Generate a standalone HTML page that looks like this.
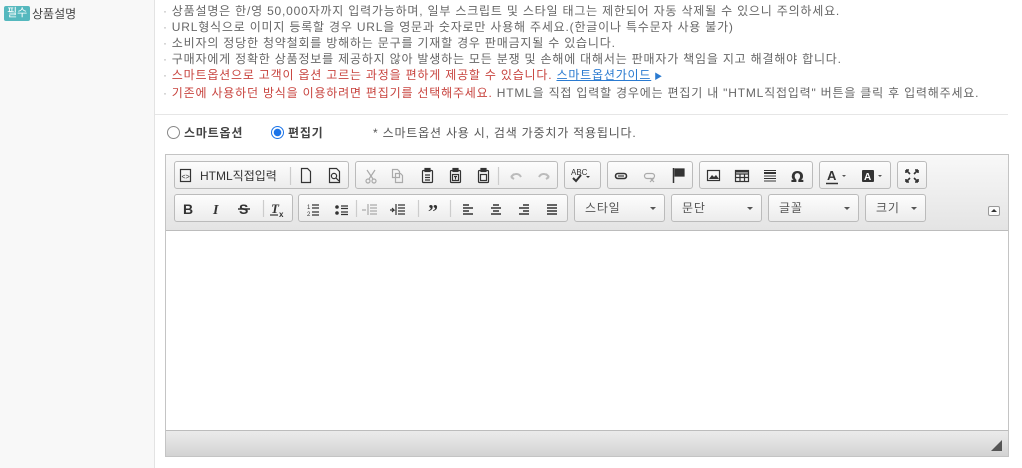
<!DOCTYPE html>
<html><head><meta charset="utf-8">
<style>
*{margin:0;padding:0;box-sizing:border-box}
body{width:1022px;height:468px;background:#fff;font-family:"Liberation Sans","Noto Sans CJK KR","NanumGothic",sans-serif;font-size:12px;color:#555;position:relative;overflow:hidden}
.left{position:absolute;left:0;top:0;width:155px;height:468px;background:#f8f8f8;border-right:1px solid #e3e3e3}
.badge{position:absolute;left:4px;top:6px;background:#55b8be;color:#fff;font-size:11px;padding:1px 3px;border-radius:2px;line-height:13px}
.lbl{position:absolute;left:32px;top:5px;color:#444;font-size:12px}
.notes{position:absolute;left:163px;top:3px;line-height:16px;font-size:12px;color:#666;letter-spacing:0.8px}
.notes div{white-space:nowrap}
.notes .r{color:#c8443f}
.notes a{color:#2a7ad0;text-decoration:underline}
.dot{color:#aaa;margin-right:4px}
.hr{position:absolute;left:155px;top:114px;width:853px;height:1px;background:#e6e6e6}
.radio{position:absolute;top:124px;font-size:12px;color:#444;font-weight:bold;letter-spacing:0.8px}
.rc{display:inline-block;width:13px;height:13px;border:1px solid #888;border-radius:50%;vertical-align:-2px;margin-right:4px;background:#fff}
.rc.on{border-color:#1a73e8;background:radial-gradient(circle,#1a73e8 3.5px,#fff 4px)}
.editor{position:absolute;left:165px;top:154px;width:844px;height:303px;border:1px solid #c4c4c4;background:#fff}
.tb{position:absolute;left:0;top:0;width:842px;height:76px;background:linear-gradient(#f8f8f8,#e4e4e4);border-bottom:1px solid #bcbcbc}
.g{position:absolute;height:28px;border:1px solid #bbb;border-radius:3px;background:linear-gradient(#fdfdfd,#ececec)}
.combo{position:absolute;height:28px;border:1px solid #bbb;border-radius:3px;background:linear-gradient(#fdfdfd,#ececec);font-size:12px;color:#555;line-height:26px;padding-left:10px;letter-spacing:0.8px}
.combo:after{content:"";position:absolute;right:8px;top:12px;border:3px solid transparent;border-top:3px solid #555}
.content{position:absolute;left:0;top:76px;width:842px;height:200px;background:#fff}
.foot{position:absolute;left:0;bottom:0;width:842px;height:26px;background:linear-gradient(#ebebeb,#d3d3d3);border-top:1px solid #bcbcbc}
</style></head><body>
<div class="left"><span class="badge">필수</span><span class="lbl">상품설명</span></div>
<div class="notes">
<div><span class="dot">·</span>상품설명은 한/영 50,000자까지 입력가능하며, 일부 스크립트 및 스타일 태그는 제한되어 자동 삭제될 수 있으니 주의하세요.</div>
<div><span class="dot">·</span>URL형식으로 이미지 등록할 경우 URL을 영문과 숫자로만 사용해 주세요.(한글이나 특수문자 사용 불가)</div>
<div><span class="dot">·</span>소비자의 정당한 청약철회를 방해하는 문구를 기재할 경우 판매금지될 수 있습니다.</div>
<div><span class="dot">·</span>구매자에게 정확한 상품정보를 제공하지 않아 발생하는 모든 분쟁 및 손해에 대해서는 판매자가 책임을 지고 해결해야 합니다.</div>
<div class="r"><span class="dot">·</span>스마트옵션으로 고객이 옵션 고르는 과정을 편하게 제공할 수 있습니다. <a>스마트옵션가이드</a><span style="color:#2a7ad0;font-size:8px"> ▶</span></div>
<div><span class="dot">·</span><span class="r">기존에 사용하던 방식을 이용하려면 편집기를 선택해주세요.</span> HTML을 직접 입력할 경우에는 편집기 내 "HTML직접입력" 버튼을 클릭 후 입력해주세요.</div>
</div>
<div class="hr"></div>
<div class="radio" style="left:167px"><span class="rc"></span>스마트옵션</div>
<div class="radio" style="left:271px"><span class="rc on"></span>편집기</div>
<div style="position:absolute;left:373px;top:124px;font-size:12px;color:#555;letter-spacing:0.8px">* 스마트옵션 사용 시, 검색 가중치가 적용됩니다.</div>

<div class="editor">
<div class="tb">
<div class="g" style="left:8px;top:6px;width:175px"></div>
<div class="g" style="left:189px;top:6px;width:203px"></div>
<div class="g" style="left:398px;top:6px;width:37px"></div>
<div class="g" style="left:441px;top:6px;width:86px"></div>
<div class="g" style="left:533px;top:6px;width:114px"></div>
<div class="g" style="left:653px;top:6px;width:72px"></div>
<div class="g" style="left:731px;top:6px;width:30px"></div>
<div class="g" style="left:8px;top:39px;width:119px"></div>
<div class="g" style="left:132px;top:39px;width:270px"></div>
<div class="combo" style="left:408px;top:39px;width:91px">스타일</div>
<div class="combo" style="left:505px;top:39px;width:91px">문단</div>
<div class="combo" style="left:602px;top:39px;width:91px">글꼴</div>
<div class="combo" style="left:699px;top:39px;width:61px">크기</div>
<div style="position:absolute;left:822px;top:51px;width:12px;height:10px;border:1px solid #999;border-radius:2px;background:#fafafa"><div style="position:absolute;left:2px;top:2px;border:3px solid transparent;border-bottom:3px solid #333;border-top:0"></div></div>

<svg width="842" height="76" style="position:absolute;left:0;top:0" fill="none" stroke="#333" stroke-width="1.2">
 <rect x="14.5" y="14.5" width="10" height="12" stroke="#333"/><text x="15.5" y="24" font-size="7" fill="#333" stroke="none" font-family="Liberation Sans">&lt;&gt;</text>
 <text x="34" y="25" font-size="12" fill="#333" stroke="none" font-family="Liberation Sans,Noto Sans CJK KR,sans-serif">HTML직접입력</text>
 <line x1="124.5" y1="12" x2="124.5" y2="30" stroke="#ccc"/>
 <path d="M135.5 13.5h6l3 3v11h-9z"/>
 <path d="M163.5 13.5h7l3 3v11h-10z"/><circle cx="168" cy="21" r="2.6"/><path d="M170 23l3 3"/>
 <g stroke="#aaa"><circle cx="202" cy="26" r="2"/><circle cx="208" cy="26" r="2"/><path d="M203 24l6-9M207 24l-6-9"/>
 <path d="M226.5 14.5h5l2 2v6h-7zM229.5 18.5h5l2 2v7h-7z"/></g>
 <g><rect x="256.5" y="15.5" width="10" height="12" rx="1"/><rect x="259" y="13.5" width="5" height="3" fill="#333"/><path d="M259 20h5M259 22.5h5M259 25h5"/>
 <rect x="284.5" y="15.5" width="10" height="12" rx="1"/><rect x="287" y="13.5" width="5" height="3" fill="#333"/><rect x="286.5" y="19.5" width="6" height="6"/><path d="M288 21.5h3M289.5 21.5v3"/>
 <rect x="312.5" y="15.5" width="10" height="12" rx="1"/><rect x="315" y="13.5" width="5" height="3" fill="#333"/><rect x="314.5" y="19.5" width="6" height="6"/></g>
 <line x1="332.5" y1="12" x2="332.5" y2="30" stroke="#ccc"/>
 <path d="M345 22c3-4 8-4 10 0M345 22l3-3M345 22l3 2" stroke="#bbb" stroke-width="2"/>
 <path d="M383 22c-3-4-8-4-10 0M383 22l-3-3M383 22l-3 2" stroke="#bbb" stroke-width="2"/>
 <text x="405" y="20" font-size="8" fill="#333" stroke="none" font-family="Liberation Sans">ABC</text><path d="M407 23l3 3 5-6" stroke-width="2"/><path d="M420 21l2 2 2-2" fill="#333" stroke="none"/>
 <rect x="449.5" y="18.5" width="11" height="5" rx="2.5" stroke-width="1.6"/><path d="M452 21h6"/>
 <g stroke="#aaa"><rect x="478.5" y="18.5" width="10" height="5" rx="2.5"/><path d="M484 23l4 4M488 23l-4 4"/></g>
 <path d="M507.5 13v15" stroke-width="1.5"/><path d="M509 14h9v7h-9z" fill="#333"/>
 <rect x="541.5" y="15.5" width="12" height="10"/><path d="M543 24l3-4 2 2 2-2 3 4" fill="#333" stroke="none"/>
 <rect x="569.5" y="15.5" width="13" height="11"/><path d="M569.5 19h13M574 19v7.5M578.5 19v7.5M569.5 22.5h13" /><path d="M569.5 16.5h13" stroke-width="2"/>
 <path d="M598 15.5h12M598 18h12M598 21h12M598 23.5h12M598 26h12" stroke-width="1"/><path d="M598 18h12" stroke-width="2"/>
 <text x="625" y="27" font-size="15" fill="#333" stroke="none" font-family="DejaVu Sans" font-weight="bold">Ω</text>
 <text x="661" y="25" font-size="13" fill="#333" stroke="none" font-family="Liberation Sans" font-weight="bold">A</text><path d="M660 28.5h12" stroke-width="1.5"/><path d="M676 20l2 2 2-2" fill="#555" stroke="none"/>
 <rect x="696" y="15" width="12" height="12" rx="1" fill="#333" stroke="none"/><text x="698" y="25" font-size="10" fill="#fff" stroke="none" font-family="Liberation Sans" font-weight="bold">A</text><path d="M712 20l2 2 2-2" fill="#555" stroke="none"/>
 <path d="M740 15l4 4M740 15h3M740 15v3M752 15l-4 4M752 15h-3M752 15v3M740 27l4-4M740 27h3M740 27v-3M752 27l-4-4M752 27h-3M752 27v-3" stroke-width="1.6"/>
 <text x="17" y="59" font-size="14" fill="#333" stroke="none" font-family="Liberation Sans" font-weight="bold">B</text>
 <text x="47" y="59" font-size="14" fill="#333" stroke="none" font-family="Liberation Serif" font-weight="bold" font-style="italic">I</text>
 <text x="73" y="59" font-size="14" fill="#333" stroke="none" font-family="Liberation Sans" font-weight="bold">S</text><path d="M72 54h12" stroke-width="1.5"/>
 <line x1="97.5" y1="45" x2="97.5" y2="62" stroke="#ccc"/>
 <text x="105" y="58" font-size="13" fill="#333" stroke="none" font-family="Liberation Serif" font-weight="bold" font-style="italic">T</text><path d="M104 60h8"/><text x="113" y="62" font-size="8" fill="#333" stroke="none" font-family="Liberation Sans" font-weight="bold">x</text>
 <text x="141" y="54" font-size="6" fill="#333" stroke="none">1</text><text x="141" y="61" font-size="6" fill="#333" stroke="none">2</text><path d="M146 50h7M146 53h7M146 57h7M146 60h7"/>
 <circle cx="171" cy="52" r="1.8" fill="#333" stroke="none"/><circle cx="171" cy="58" r="1.8" fill="#333" stroke="none"/><path d="M175 51h7M175 53.5h7M175 57h7M175 59.5h7"/>
 <line x1="190.5" y1="45" x2="190.5" y2="62" stroke="#ccc"/>
 <g stroke="#aaa"><path d="M204 50h7M204 53h7M204 56h7M204 59h7M202 49v11M196 55h4"/></g>
 <path d="M232 50h7M232 53h7M232 56h7M232 59h7M230 49v11M224 55h4l-2-2M228 55l-2 2"/>
 <line x1="252.5" y1="45" x2="252.5" y2="62" stroke="#ccc"/>
 <text x="262" y="63" font-size="20" fill="#333" stroke="none" font-family="Liberation Serif" font-weight="bold">”</text>
 <line x1="284.5" y1="45" x2="284.5" y2="62" stroke="#ccc"/>
 <path d="M297 50h6M297 53h10M297 56h6M297 59h10" stroke-width="1.5"/>
 <path d="M327 50h6M325 53h10M327 56h6M325 59h10" stroke-width="1.5"/>
 <path d="M357 50h6M353 53h10M357 56h6M353 59h10" stroke-width="1.5"/>
 <path d="M381 50h10M381 53h10M381 56h10M381 59h10" stroke-width="1.5"/>
</svg>
</div>
<div class="content"></div>
<div class="foot"><div style="position:absolute;right:6px;bottom:5px;width:0;height:0;border-left:11px solid transparent;border-bottom:11px solid #555"></div></div>
</div>
</body></html>
